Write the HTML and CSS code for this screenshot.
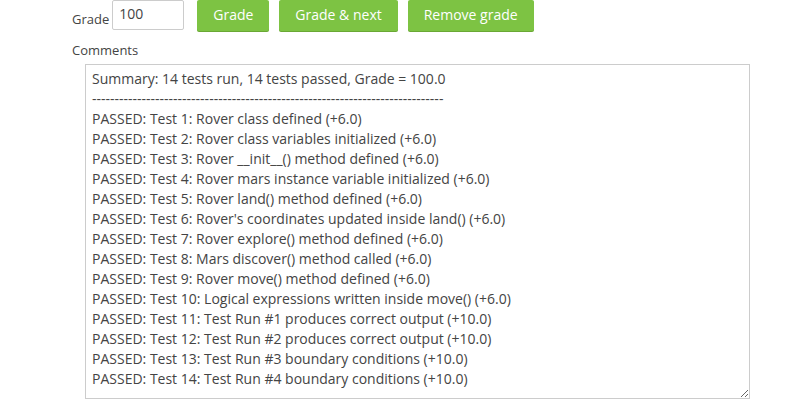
FILE: index.html
```html
<!DOCTYPE html>
<html>
  <head>
    <title>Grade submission</title>
    <link rel="stylesheet" href="styles.css">
  </head>
  <body>
    <form class="grade-form">
      <div class="grade-row">
        <label for="grade" class="field-label">Grade</label>
        <input type="text" id="grade" name="grade" value="100" class="grade-input">
        <button type="button" class="btn btn-first">Grade</button>
        <button type="button" class="btn">Grade &amp; next</button>
        <button type="button" class="btn">Remove grade</button>
      </div>

      <label for="comments" class="field-label comments-label">Comments</label>
      <textarea id="comments" name="comments" class="comments">Summary: 14 tests run, 14 tests passed, Grade = 100.0
------------------------------------------------------------------------------
PASSED: Test 1: Rover class defined (+6.0)
PASSED: Test 2: Rover class variables initialized (+6.0)
PASSED: Test 3: Rover __init__() method defined (+6.0)
PASSED: Test 4: Rover mars instance variable initialized (+6.0)
PASSED: Test 5: Rover land() method defined (+6.0)
PASSED: Test 6: Rover's coordinates updated inside land() (+6.0)
PASSED: Test 7: Rover explore() method defined (+6.0)
PASSED: Test 8: Mars discover() method called (+6.0)
PASSED: Test 9: Rover move() method defined (+6.0)
PASSED: Test 10: Logical expressions written inside move() (+6.0)
PASSED: Test 11: Test Run #1 produces correct output (+10.0)
PASSED: Test 12: Test Run #2 produces correct output (+10.0)
PASSED: Test 13: Test Run #3 boundary conditions (+10.0)
PASSED: Test 14: Test Run #4 boundary conditions (+10.0)</textarea>
    </form>
  </body>
</html>
```

FILE: styles.css
```css
body {
  margin: 0;
  font-family: "Open Sans", sans-serif;
  font-size: 14px;
  color: #444;
  background-color: #fff;
}

.grade-form {
  padding-left: 72px;
}

.grade-row {
  display: flex;
  align-items: flex-end;
  height: 31px;
}

.field-label {
  font-size: 13px;
  color: #444;
}

.grade-row .field-label {
  margin-right: 3px;
  margin-bottom: 3px;
}

.grade-input {
  width: 72px;
  height: 30px;
  box-sizing: border-box;
  padding: 0 6px 3px;
  border: 1px solid #ccc;
  border-radius: 2px;
  font-family: "Open Sans", sans-serif;
  font-size: 14px;
  color: #444;
  margin-right: 13px;
  align-self: flex-start;
}

.btn {
  height: 31px;
  box-sizing: border-box;
  padding: 0 16px 2px;
  border: none;
  border-radius: 2px;
  background-color: #7dc343;
  box-shadow: 0 1px 0 #6aa834;
  color: #fff;
  font-family: "Open Sans", sans-serif;
  font-size: 14px;
  margin-right: 10px;
  align-self: flex-start;
}

.comments-label {
  display: block;
  margin-top: 10px;
  line-height: 18px;
}

.comments {
  display: block;
  margin: 5px 0 0 13px;
  width: 665px;
  height: 335px;
  box-sizing: border-box;
  padding: 4px 6px;
  border: 1px solid #ccc;
  border-radius: 0;
  font-family: "Open Sans", sans-serif;
  font-size: 14px;
  line-height: 20px;
  color: #444;
  overflow: hidden;
}
```
